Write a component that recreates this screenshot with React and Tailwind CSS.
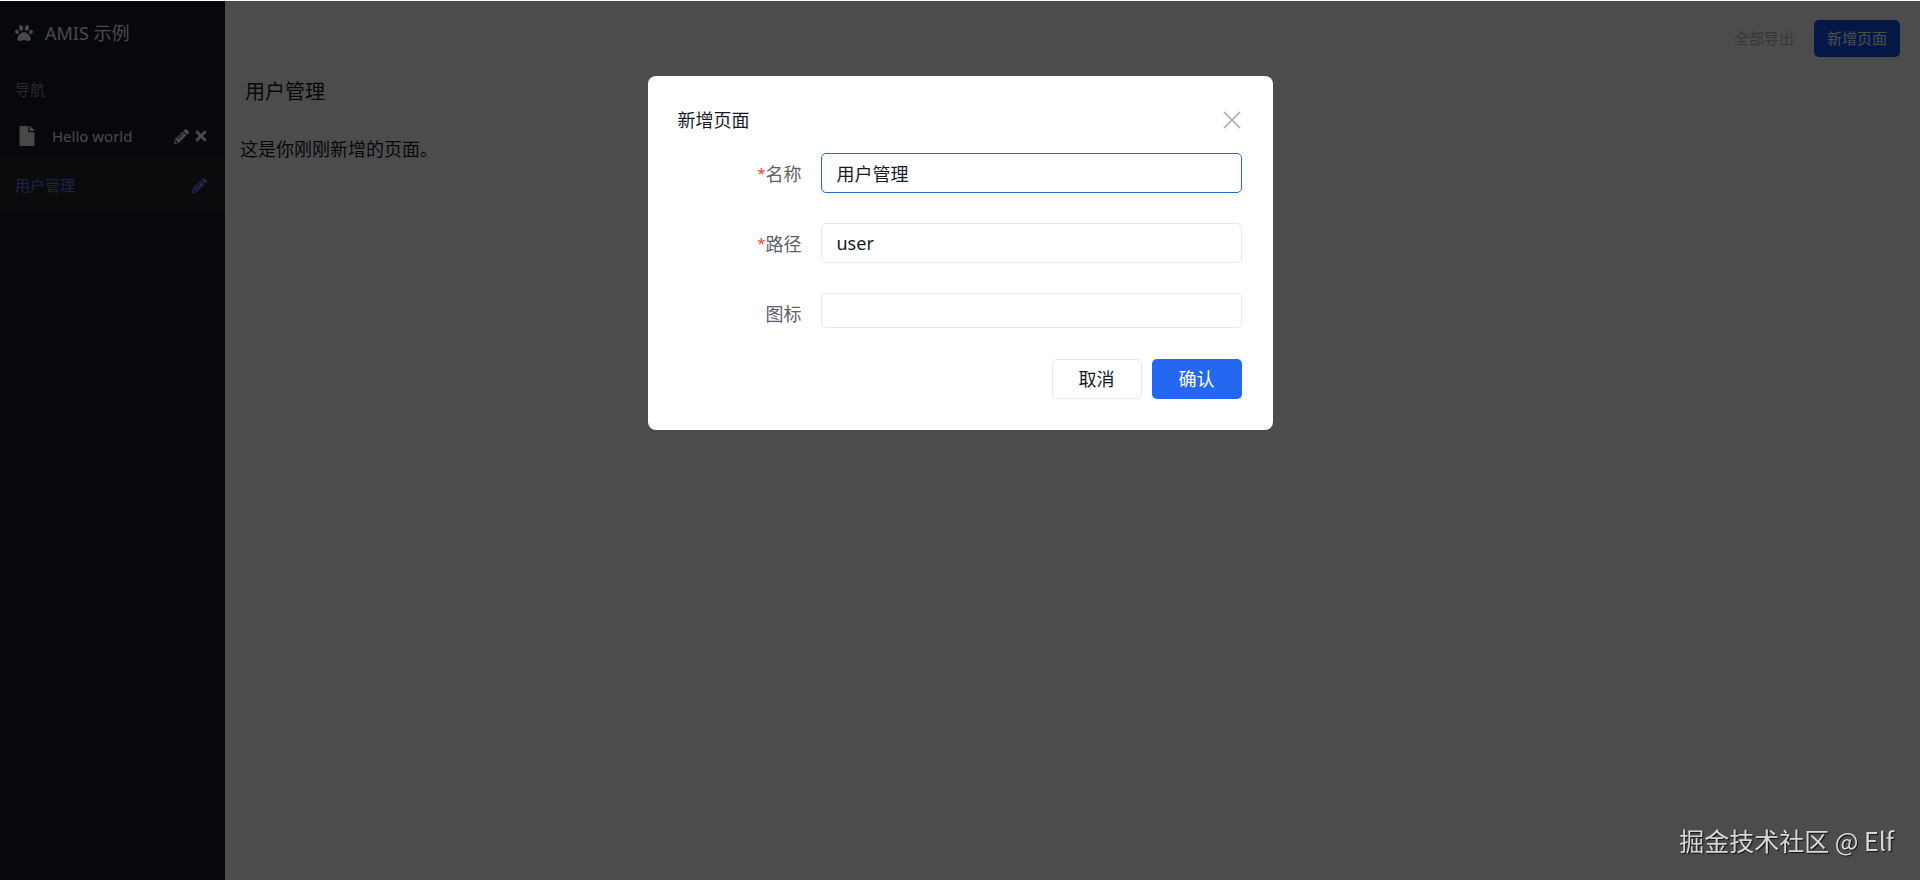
import React from 'react';
import { FaPaw, FaFile, FaPencilAlt, FaTimes } from 'react-icons/fa';

const fields = [
  { id: 'label', label: '名称', value: '用户管理', required: true, box: 'h-10 border-[#2f66c9]' },
  { id: 'path', label: '路径', value: 'user', required: true, box: 'h-10 border-[#e8e9eb]' },
  { id: 'icon', label: '图标', value: '', required: false, box: 'h-[35px] border-[#e8e9eb]' },
];

const Sidebar = () => (
  <aside className="w-[225px] shrink-0 bg-[#171b26] text-[#f0f0f0]">
    <div className="flex h-16 items-center gap-3 pl-[15px] text-lg">
      <FaPaw className="text-[18px]" />
      <span>AMIS 示例</span>
    </div>
    <nav className="text-[15px]">
      <div className="flex h-[49px] items-center pl-[15px] text-[#8a8a8a]">导航</div>
      <div className="flex h-11 items-center pr-4 pl-[18px]">
        <a href="#hello" className="flex grow items-center gap-4">
          <FaFile className="w-[18px] text-[20px]" />
          <span>Hello world</span>
        </a>
        <button type="button" aria-label="编辑"><FaPencilAlt /></button>
        <button type="button" aria-label="删除" className="ml-1"><FaTimes className="text-[16px]" /></button>
      </div>
      <div className="flex h-[55px] items-center bg-[#20272b] pr-[18px] pl-[15px] text-[#6078f0]">
        <a href="#user" className="grow">用户管理</a>
        <button type="button" aria-label="编辑"><FaPencilAlt /></button>
      </div>
    </nav>
  </aside>
);

const Field = ({ field }) => (
  <div className="flex items-start gap-[19px]">
    <label htmlFor={field.id} className="flex h-[42px] w-[124px] shrink-0 items-center justify-end text-[#5e626a]">
      {field.required && <span className="text-[15px] text-[#f33e3e]">*</span>}
      {field.label}
    </label>
    <input
      id={field.id}
      type="text"
      defaultValue={field.value}
      className={`min-w-0 grow rounded-[5px] border bg-white px-[15px] text-[#151b26] outline-none ${field.box}`}
    />
  </div>
);

const Dialog = () => (
  <div className="fixed inset-x-0 top-px bottom-0 flex items-start justify-center bg-black/70 pt-[75px]">
    <div role="dialog" aria-labelledby="dialog-title" className="w-[625px] rounded-lg bg-white py-[31px] pr-[31px] pl-[30px] text-lg">
      <div className="flex h-[26px] items-center justify-between">
        <h2 id="dialog-title" className="text-[#151b26]">新增页面</h2>
        <button type="button" aria-label="关闭" className="p-px text-[#b8babf]">
          <svg width="18" height="18" viewBox="0 0 18 18" fill="none" stroke="currentColor" strokeWidth="2">
            <path d="M1 1 17 17M17 1 1 17" />
          </svg>
        </button>
      </div>
      <form className="mt-5">
        <div className="flex flex-col gap-7">
          {fields.map(f => <Field key={f.id} field={f} />)}
        </div>
        <div className="mt-6 flex justify-end gap-[10px]">
          <button type="button" className="h-10 w-[90px] rounded-[5px] border border-[#e8e9eb] text-[#151b26]">取消</button>
          <button type="button" className="h-10 w-[90px] rounded-[5px] bg-[#2468f2] text-white">确认</button>
        </div>
      </form>
    </div>
  </div>
);

const App = () => (
  <div className="flex min-h-screen border-t border-white bg-white font-['Noto_Sans','Noto_Sans_CJK_SC',sans-serif]">
    <Sidebar />
    <main className="grow text-[#151b26]">
      <header className="flex h-[65px] items-center justify-end gap-5 pt-[10px] pr-5 text-[15px]">
        <button type="button" disabled className="text-[#b8babf]">全部导出</button>
        <button type="button" className="h-[37px] rounded-[5px] bg-[#1152e8] px-[13px] text-white">新增页面</button>
      </header>
      <h1 className="flex h-[52px] items-center px-5 text-xl">用户管理</h1>
      <p className="px-[15px] pt-[17px] text-lg">这是你刚刚新增的页面。</p>
    </main>
    <Dialog />
    <div className="fixed right-[26px] bottom-5 text-[25px] leading-10 text-[#d8d8d8] font-['Noto_Sans_CJK_SC',sans-serif] [text-shadow:1px_1px_1px_#111]">
      掘金技术社区 @ Elf
    </div>
  </div>
);

export default App;
